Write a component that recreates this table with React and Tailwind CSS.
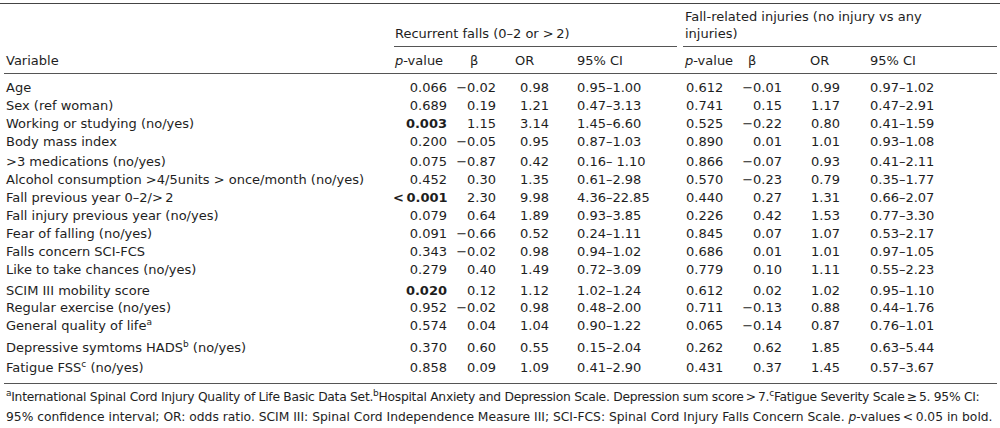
import React from "react";

const Sup = ({ children }) => (
  <span className="relative -top-[5px] text-[9px] leading-none">{children}</span>
);

const rows = [
  { label: "Age", p1: "0.066", b1: "−0.02", or1: "0.98", ci1: "0.95–1.00", p2: "0.612", b2: "−0.01", or2: "0.99", ci2: "0.97–1.02", h: "h-[18px]" },
  { label: "Sex (ref woman)", p1: "0.689", b1: "0.19", or1: "1.21", ci1: "0.47–3.13", p2: "0.741", b2: "0.15", or2: "1.17", ci2: "0.47–2.91", h: "h-[18px]" },
  { label: "Working or studying (no/yes)", p1: "0.003", bold: true, b1: "1.15", or1: "3.14", ci1: "1.45–6.60", p2: "0.525", b2: "−0.22", or2: "0.80", ci2: "0.41–1.59", h: "h-[18px]" },
  { label: "Body mass index", p1: "0.200", b1: "−0.05", or1: "0.95", ci1: "0.87–1.03", p2: "0.890", b2: "0.01", or2: "1.01", ci2: "0.93–1.08", h: "h-[20px]" },
  { label: ">3 medications (no/yes)", p1: "0.075", b1: "−0.87", or1: "0.42", ci1: "0.16– 1.10", p2: "0.866", b2: "−0.07", or2: "0.93", ci2: "0.41–2.11", h: "h-[18px]" },
  { label: "Alcohol consumption >4/5units > once/month (no/yes)", p1: "0.452", b1: "0.30", or1: "1.35", ci1: "0.61–2.98", p2: "0.570", b2: "−0.23", or2: "0.79", ci2: "0.35–1.77", h: "h-[18px]" },
  { label: "Fall previous year 0–2/>\u20092", p1: "<\u20090.001", bold: true, b1: "2.30", or1: "9.98", ci1: "4.36–22.85", p2: "0.440", b2: "0.27", or2: "1.31", ci2: "0.66–2.07", h: "h-[18px]" },
  { label: "Fall injury previous year (no/yes)", p1: "0.079", b1: "0.64", or1: "1.89", ci1: "0.93–3.85", p2: "0.226", b2: "0.42", or2: "1.53", ci2: "0.77–3.30", h: "h-[18px]" },
  { label: "Fear of falling (no/yes)", p1: "0.091", b1: "−0.66", or1: "0.52", ci1: "0.24–1.11", p2: "0.845", b2: "0.07", or2: "1.07", ci2: "0.53–2.17", h: "h-[18px]" },
  { label: "Falls concern SCI-FCS", p1: "0.343", b1: "−0.02", or1: "0.98", ci1: "0.94–1.02", p2: "0.686", b2: "0.01", or2: "1.01", ci2: "0.97–1.05", h: "h-[18px]" },
  { label: "Like to take chances (no/yes)", p1: "0.279", b1: "0.40", or1: "1.49", ci1: "0.72–3.09", p2: "0.779", b2: "0.10", or2: "1.11", ci2: "0.55–2.23", h: "h-[21px]" },
  { label: "SCIM III mobility score", p1: "0.020", bold: true, b1: "0.12", or1: "1.12", ci1: "1.02–1.24", p2: "0.612", b2: "0.02", or2: "1.02", ci2: "0.95–1.10", h: "h-[17px]" },
  { label: "Regular exercise (no/yes)", p1: "0.952", b1: "−0.02", or1: "0.98", ci1: "0.48–2.00", p2: "0.711", b2: "−0.13", or2: "0.88", ci2: "0.44–1.76", h: "h-[18px]" },
  { label: <>General quality of life<Sup>a</Sup></>, p1: "0.574", b1: "0.04", or1: "1.04", ci1: "0.90–1.22", p2: "0.065", b2: "−0.14", or2: "0.87", ci2: "0.76–1.01", h: "h-[22px]" },
  { label: <>Depressive symtoms HADS<Sup>b</Sup> (no/yes)</>, p1: "0.370", b1: "0.60", or1: "0.55", ci1: "0.15–2.04", p2: "0.262", b2: "0.62", or2: "1.85", ci2: "0.63–5.44", h: "h-[20px]" },
  { label: <>Fatigue FSS<Sup>c</Sup> (no/yes)</>, p1: "0.858", b1: "0.09", or1: "1.09", ci1: "0.41–2.90", p2: "0.431", b2: "0.37", or2: "1.45", ci2: "0.57–3.67", h: "h-[18px]" },
];

const cols = "grid grid-cols-[389px_62px_50px_67px_108px_60px_60px_60px_137px]";

export default function App() {
  return (
    <div className="w-[1000px] h-[428px] bg-white text-[#1e1e1e] text-[13px] font-['DejaVu_Sans',Verdana,sans-serif] overflow-hidden">
      <div className="pt-[3px]">
        <div className="border-t border-[#444]" />
      </div>

      <div className="ml-[4px] mr-[3px]">
        {/* group headers */}
        <div className="flex items-end leading-[17px]">
          <div className="w-[390px]" />
          <div className="w-[283px] pl-[1px] pb-[4px] border-b border-[#555] whitespace-nowrap">
            Recurrent falls (0–2 or &gt;{"\u2009"}2)
          </div>
          <div className="w-[6px]" />
          <div className="w-[314px] pl-[2px] pt-[4px] pb-[4px] border-b border-[#555]">
            Fall-related injuries (no injury vs any
            <br />
            injuries)
          </div>
        </div>

        {/* column headers */}
        <div className={`${cols} h-[27px] items-center leading-[17px] border-b border-[#555]`}>
          <div className="pl-[2px]">Variable</div>
          <div className="pl-[2px]"><i>p</i>-value</div>
          <div className="pl-[15px]">β</div>
          <div className="pl-[10px]">OR</div>
          <div className="pl-[5px]">95% CI</div>
          <div className="pl-[5px]"><i>p</i>-value</div>
          <div className="pl-[8px]">β</div>
          <div className="pl-[10px]">OR</div>
          <div className="pl-[10px]">95% CI</div>
        </div>

        {/* body */}
        <div className="pt-[5px] pb-[6px] border-b border-[#555]">
          {rows.map((r, i) => (
            <div key={i} className={`${cols} ${r.h} items-start leading-[18px] whitespace-nowrap`}>
              <div className="pl-[2px]">{r.label}</div>
              <div className={`text-right pr-[8px] ${r.bold ? "font-bold" : ""}`}>{r.p1}</div>
              <div className="text-right pr-[9px]">{r.b1}</div>
              <div className="pl-[15px]">{r.or1}</div>
              <div className="pl-[5px]">{r.ci1}</div>
              <div className="pl-[6px]">{r.p2}</div>
              <div className="text-right pr-[18px]">{r.b2}</div>
              <div className="pl-[11px]">{r.or2}</div>
              <div className="pl-[10px]">{r.ci2}</div>
            </div>
          ))}
        </div>

        {/* footnote */}
        <div className="pt-[3px] pl-[2px] text-[12.3px] leading-[20px] whitespace-nowrap">
          <div className="tracking-[-0.27px]">
            <Sup>a</Sup>International Spinal Cord Injury Quality of Life Basic Data Set.
            <Sup>b</Sup>Hospital Anxiety and Depression Scale. Depression sum score{"\u2009"}&gt;{"\u2009"}7.
            <Sup>c</Sup>Fatigue Severity Scale{"\u2009"}≥{"\u2009"}5. 95% CI:
          </div>
          <div>
            95% confidence interval; OR: odds ratio. SCIM III: Spinal Cord Independence Measure III; SCI-FCS: Spinal Cord Injury Falls Concern Scale. <i>p</i>-values{"\u2009"}&lt;{"\u2009"}0.05 in bold.
          </div>
        </div>
      </div>
    </div>
  );
}
